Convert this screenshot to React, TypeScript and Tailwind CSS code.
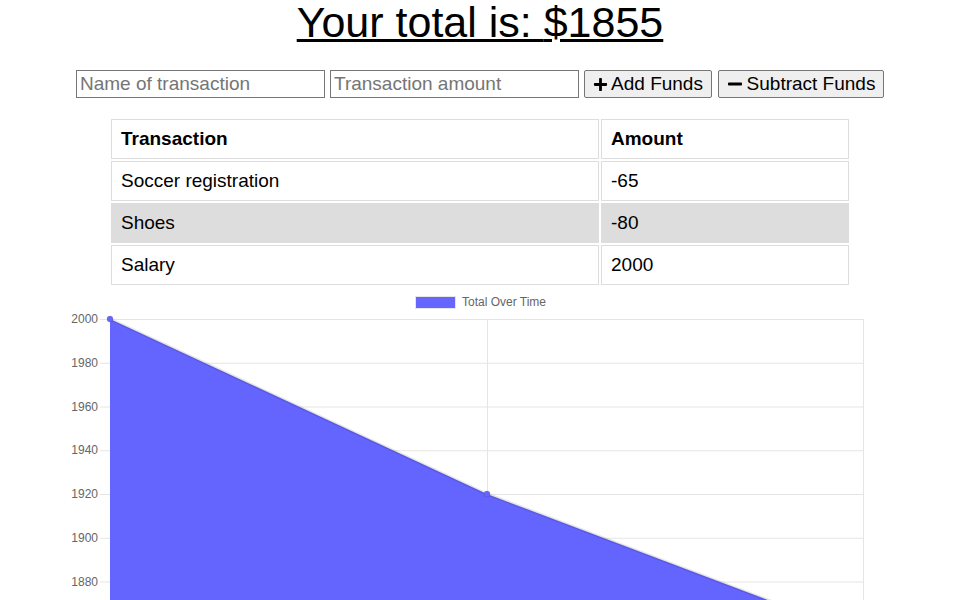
import { FC } from 'react';
import { FaPlus, FaMinus } from 'react-icons/fa';

interface Transaction {
  name: string;
  value: number;
}

const transactions: Transaction[] = [
  { name: 'Soccer registration', value: -65 },
  { name: 'Shoes', value: -80 },
  { name: 'Salary', value: 2000 },
];

const yTicks = [2000, 1980, 1960, 1940, 1920, 1900, 1880];
const top = 319;
const step = 43.75;

const Chart: FC = () => (
  <svg width="960" height="314" viewBox="0 287 960 314" className="block">
    <rect x="415.5" y="296.5" width="40" height="12" fill="#6666ff" stroke="#e6e6e6" strokeWidth="1" />
    <text x="462" y="306" fontSize="12" fill="#666" fontFamily="'Liberation Sans', Arial, sans-serif">
      Total Over Time
    </text>
    {yTicks.map((t, i) => (
      <g key={t}>
        <line x1="100" x2="863" y1={top + i * step + 0.5} y2={top + i * step + 0.5} stroke="#e5e5e5" strokeWidth="1" />
        <text
          x="98"
          y={top + i * step + 4}
          fontSize="12"
          fill="#666"
          textAnchor="end"
          fontFamily="'Liberation Sans', Arial, sans-serif"
        >
          {t}
        </text>
      </g>
    ))}
    <line x1="487.5" x2="487.5" y1={top} y2="601" stroke="#e5e5e5" strokeWidth="1" />
    <line x1="863.5" x2="863.5" y1={top} y2="601" stroke="#e5e5e5" strokeWidth="1" />
    <polygon points="110,319 487,494 863,636 863,700 110,700" fill="#6464ff" />
    <polyline points="110,319 487,494 863,636" fill="none" stroke="rgba(0,0,0,0.1)" strokeWidth="3" />
    <circle cx="110" cy="319" r="3" fill="#6666ff" stroke="rgba(0,0,0,0.1)" />
    <circle cx="487" cy="494" r="3" fill="#6666ff" stroke="rgba(0,0,0,0.1)" />
  </svg>
);

const App: FC = () => {
  return (
    <div className="w-[960px] h-[600px] overflow-hidden bg-white text-black font-['Liberation_Sans',Arial,sans-serif]">
      <h1 className="-mt-[3px] text-center text-[43px] leading-[50px] font-normal underline underline-offset-[2px] decoration-[3px]">
        Your total is: <span>$1855</span>
      </h1>

      <form className="mt-[23px] flex justify-center items-center gap-[5px]">
        <input
          type="text"
          placeholder="Name of transaction"
          className="w-[249px] h-[28px] border border-[#767676] px-[3px] text-[19px] placeholder:text-[#757575] outline-none"
        />
        <input
          type="number"
          placeholder="Transaction amount"
          className="w-[249px] h-[28px] border border-[#767676] px-[3px] text-[19px] placeholder:text-[#757575] outline-none"
        />
        <button
          type="button"
          className="h-[28px] w-[128px] flex items-center justify-center gap-[3px] bg-[#efefef] border border-[#767676] rounded-[2px] text-[19px]"
        >
          <FaPlus className="w-[15px] h-[15px]" /> Add Funds
        </button>
        <button
          type="button"
          className="h-[28px] w-[166px] ml-[1px] flex items-center justify-center gap-[4px] bg-[#efefef] border border-[#767676] rounded-[2px] text-[19px]"
        >
          <FaMinus className="w-[16px] h-[16px]" /> Subtract Funds
        </button>
      </form>

      <table className="mt-[19px] mx-auto w-[742px] border-separate border-spacing-[2px] text-[19px]">
        <thead>
          <tr>
            <th className="h-[40px] w-[488px] border border-[#ddd] pl-[9px] text-left font-bold">Transaction</th>
            <th className="h-[40px] border border-[#ddd] pl-[9px] text-left font-bold">Amount</th>
          </tr>
        </thead>
        <tbody>
          {transactions.map((t, i) => (
            <tr key={t.name} className={i === 1 ? 'bg-[#ddd]' : ''}>
              <td className="h-[40px] border border-[#ddd] pl-[9px]">{t.name}</td>
              <td className="h-[40px] border border-[#ddd] pl-[9px]">{t.value}</td>
            </tr>
          ))}
        </tbody>
      </table>

      <Chart />
    </div>
  );
};

export default App;
